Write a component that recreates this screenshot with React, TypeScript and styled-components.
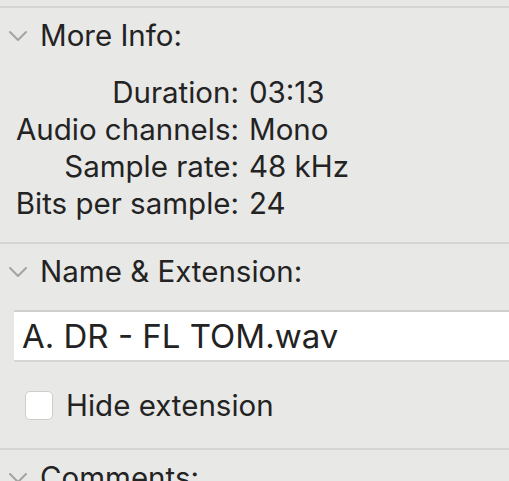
import React from 'react';
import styled, { createGlobalStyle } from 'styled-components';

const GlobalStyle = createGlobalStyle`
  html, body {
    margin: 0;
    padding: 0;
    background: #e8e8e7;
    overflow: hidden;
  }
  body {
    font-family: Inter, "Liberation Sans", Arial, sans-serif;
    color: #232323;
  }
`;

interface InfoRow {
  label: string;
  value: string;
}

const infoRows: InfoRow[] = [
  { label: 'Duration:', value: '03:13' },
  { label: 'Audio channels:', value: 'Mono' },
  { label: 'Sample rate:', value: '48 kHz' },
  { label: 'Bits per sample:', value: '24' },
];

const Chevron: React.FC = () => (
  <ChevronIcon viewBox="0 0 20 12" width="20" height="12">
    <path d="M2 2 L10 10 L18 2" fill="none" stroke="#a3a3a3" strokeWidth="2" strokeLinecap="round" strokeLinejoin="round" />
  </ChevronIcon>
);

const App: React.FC = () => {
  return (
    <Panel>
      <GlobalStyle />
      <Section>
        <SectionHeader>
          <Chevron />
          <HeaderTitle>More Info:</HeaderTitle>
        </SectionHeader>
        <InfoGrid>
          {infoRows.map((row) => (
            <React.Fragment key={row.label}>
              <InfoLabel>{row.label}</InfoLabel>
              <InfoValue>{row.value}</InfoValue>
            </React.Fragment>
          ))}
        </InfoGrid>
      </Section>

      <Section>
        <SectionHeader>
          <Chevron />
          <HeaderTitle>Name &amp; Extension:</HeaderTitle>
        </SectionHeader>
        <NameField>A. DR - FL TOM.wav</NameField>
        <CheckRow>
          <CheckBox />
          <CheckLabel>Hide extension</CheckLabel>
        </CheckRow>
      </Section>

      <Section>
        <SectionHeader>
          <Chevron />
          <HeaderTitle>Comments:</HeaderTitle>
        </SectionHeader>
      </Section>
    </Panel>
  );
};

const Panel = styled.div`
  padding-top: 6px;
  width: 509px;
  height: 481px;
  overflow: hidden;
`;

const Section = styled.section`
  border-top: 2px solid #d5d5d4;
`;

const SectionHeader = styled.div`
  display: flex;
  align-items: center;
  height: 56px;
  padding-left: 8px;
  gap: 12px;
`;

const ChevronIcon = styled.svg`
  flex-shrink: 0;
`;

const HeaderTitle = styled.div`
  font-size: 29.5px;
  line-height: 1;
  white-space: nowrap;
`;

const InfoGrid = styled.div`
  display: grid;
  grid-template-columns: 225px auto;
  column-gap: 10px;
  padding-left: 14px;
  padding-top: 10px;
  padding-bottom: 20px;
  font-size: 29.5px;
  line-height: 37px;
`;

const InfoLabel = styled.div`
  text-align: right;
  white-space: nowrap;
`;

const InfoValue = styled.div`
  white-space: nowrap;
`;

const NameField = styled.div`
  margin-left: 14px;
  margin-right: -20px;
  margin-top: 10px;
  height: 48px;
  display: flex;
  align-items: center;
  padding-left: 8px;
  background: #ffffff;
  border-top: 2px solid #cfcfce;
  border-bottom: 2px solid #d6d6d5;
  font-size: 33px;
  white-space: nowrap;
`;

const CheckRow = styled.div`
  display: flex;
  align-items: center;
  gap: 13px;
  padding-left: 25px;
  height: 86px;
`;

const CheckBox = styled.span`
  width: 28px;
  height: 29px;
  box-sizing: border-box;
  background: #ffffff;
  border: 1px solid #cdcdcd;
  border-radius: 5px;
`;

const CheckLabel = styled.span`
  font-size: 29.5px;
`;

export default App;
